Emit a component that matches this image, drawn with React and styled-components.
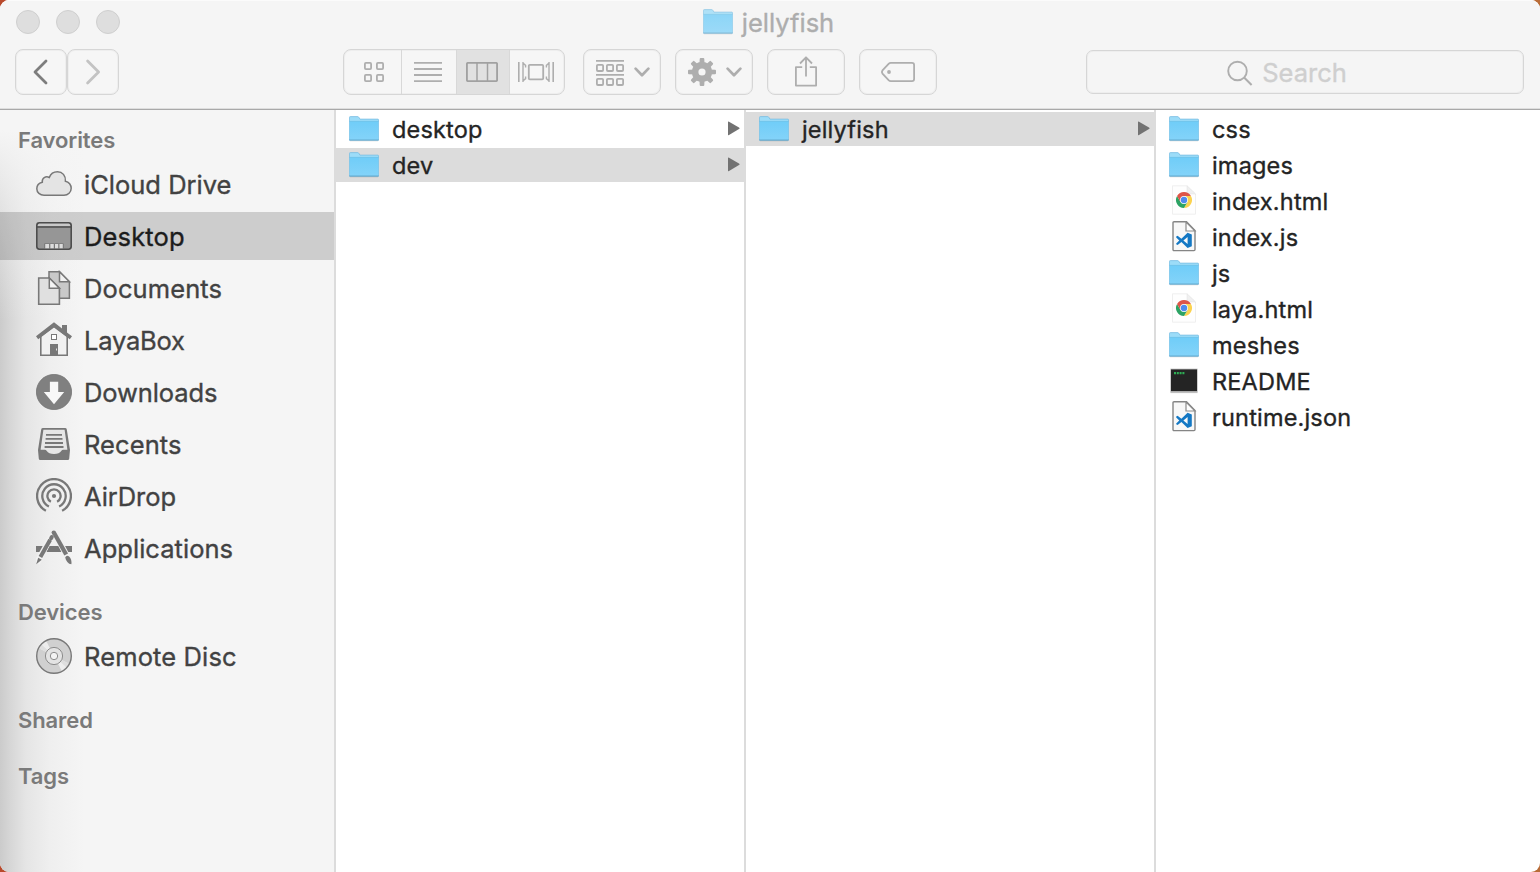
import React from 'react';
import styled, { createGlobalStyle } from 'styled-components';

const GlobalStyle = createGlobalStyle`
  * { box-sizing: border-box; }
  body {
    margin: 0;
    background: linear-gradient(to right, #b8492c, #b96c38);
    font-family: Inter, "Liberation Sans", sans-serif;
    -webkit-text-stroke: 0.35px currentColor;
  }
`;

const Window = styled.div`
  display: flex;
  flex-direction: column;
  width: 1540px;
  height: 872px;
  overflow: hidden;
  border-radius: 9px;
  background: #fff;
`;

const Header = styled.header`
  height: 110px;
  flex: none;
  background: #f5f5f5;
  border-bottom: 1px solid #a9a9a9;
  box-shadow: inset 0 1px #fbfbfb, inset 0 -1px #dedede;
`;

const TitleBar = styled.div`
  display: grid;
  grid-template-columns: 1fr auto 1fr;
  align-items: center;
  height: 44px;
  padding: 0 19px 0 16px;
`;

const Lights = styled.div`
  display: flex;
  gap: 16px;
`;

const Light = styled.span`
  width: 24px;
  height: 24px;
  border-radius: 50%;
  background: #dedede;
  border: 1px solid #cfcfcf;
`;

const Title = styled.div`
  display: flex;
  align-items: center;
  gap: 9px;
  color: #adadad;
  font-size: 25.5px;
  line-height: 32px;

  svg { opacity: 0.78; }
`;

const TitleText = styled.span`
  padding-top: 2px;
`;

const Toolbar = styled.div`
  display: flex;
  align-items: center;
  height: 46px;
  margin-top: 5px;
  padding: 0 16px 0 15px;
`;

const Button = styled.button`
  display: flex;
  align-items: center;
  justify-content: center;
  gap: ${(p) => p.$gap || 0}px;
  width: ${(p) => p.$width || 78}px;
  height: 46px;
  padding: ${(p) => p.$pad || '0'};
  border: 1px solid #d6d6d6;
  border-radius: 8px;
  background: #f6f6f6;
  box-shadow: inset 0 0 0 1px #eeeeee;
`;

const NavGroup = styled.div`
  display: flex;
  margin-right: 224px;
`;

const Segments = styled.div`
  display: flex;
  width: 222px;
  height: 46px;
  margin-right: 18px;
  overflow: hidden;
  border: 1px solid #d6d6d6;
  border-radius: 8px;
  background: #f6f6f6;
  box-shadow: inset 0 0 0 1px #eeeeee;
`;

const Segment = styled.button`
  display: flex;
  align-items: center;
  justify-content: center;
  width: ${(p) => p.$width}px;
  padding: ${(p) => p.$pad || '0'};
  border: 0;
  border-right: ${(p) => (p.$last ? '0' : '1px solid #d8d8d8')};
  background: ${(p) => (p.$active ? '#e1e1e1' : 'transparent')};
`;

const Actions = styled.div`
  display: flex;
  gap: 14px;
  margin-right: 149px;
`;

const SearchField = styled.div`
  display: flex;
  flex: 1;
  align-items: center;
  justify-content: center;
  gap: 9px;
  height: 44px;
  padding-right: 50px;
  padding-left: 14px;
  border: 1px solid #d6d6d6;
  border-radius: 7px;
  box-shadow: inset 0 0 0 1px #eeeeee;
  color: #cfcfcf;
  font-size: 25.5px;
  line-height: 30px;
`;

const SearchText = styled.span`
  padding-top: 2px;
`;

const Body = styled.div`
  display: flex;
  flex: 1;
  min-height: 0;
`;

const Sidebar = styled.nav`
  width: 336px;
  flex: none;
  padding-top: 10px;
  border-right: 2px solid #dcdcdc;
  background:
    linear-gradient(to bottom, #f5f5f5 20px, rgba(245, 245, 245, 0.6) 90px, rgba(245, 245, 245, 0) 210px),
    linear-gradient(to right, #cbcbcb 0, #d6d6d6 10px, #e5e5e5 26px, #efefef 50px, #f5f5f5 84px);
`;

const Group = styled.section`
  margin-bottom: ${(p) => p.$after}px;
`;

const GroupTitle = styled.h2`
  height: 40px;
  margin: 0;
  padding-left: 18px;
  color: #7a7a7a;
  font-size: 22px;
  font-weight: 600;
  letter-spacing: -0.1px;
  line-height: 40px;
  -webkit-text-stroke: 0;
`;

const Places = styled.div`
  display: grid;
  gap: 4px;
`;

const Place = styled.div`
  display: flex;
  align-items: center;
  gap: 12px;
  height: 48px;
  padding-left: 36px;
  background: ${(p) => (p.$active ? 'rgba(0, 0, 0, 0.16)' : 'transparent')};
  color: ${(p) => (p.$active ? '#1c1c1c' : '#424242')};
  font-size: 25.5px;
  letter-spacing: ${(p) => p.$tracking}px;
  white-space: nowrap;
`;

const Column = styled.div`
  width: ${(p) => (p.$last ? 'auto' : '410px')};
  flex: ${(p) => (p.$last ? '1' : 'none')};
  display: flex;
  flex-direction: column;
  gap: 2px;
  padding-top: 2px;
  border-right: ${(p) => (p.$last ? '0' : '2px solid #dcdcdc')};
`;

const FileRow = styled.div`
  display: flex;
  align-items: center;
  gap: 13px;
  height: 34px;
  padding: 0 4px 0 13px;
  background: ${(p) => (p.$active ? '#dcdcdc' : 'transparent')};
  color: #242424;
  font-size: 23.5px;
  letter-spacing: 0.18px;
  line-height: 32px;
`;

const FileName = styled.span`
  flex: 1;
  padding-top: 2px;
`;

const INK = '#aeaeae';
const SIDE = '#787878';

const Folder = () => (
  <svg width="30" height="26" viewBox="0 0 30 26">
    <defs>
      <linearGradient id="folderFace" x1="0" y1="0" x2="0" y2="1">
        <stop offset="0" stopColor="#70cdf8" />
        <stop offset="1" stopColor="#83d3f9" />
      </linearGradient>
    </defs>
    <path d="M.4 24V1.5Q.4.6 1.4.6H8.6Q9.4.6 10 1.5L10.9 3.1H28.6Q29.6 3.1 29.6 4V24Z" fill="#9cdcf8" stroke="#71b9df" strokeWidth=".7" />
    <path d="M.7 5.6H29.3V23.6H.7Z" fill="url(#folderFace)" />
    <path d="M.5 5.4H29.5" stroke="#63bce8" strokeWidth=".7" />
    <path d="M.3 24.1H29.7" stroke="#529fc8" strokeWidth=".9" />
    <path d="M1 25.1H29" stroke="#000" strokeOpacity=".1" strokeWidth=".7" />
  </svg>
);

const ChromeDoc = () => (
  <svg width="30" height="32" viewBox="0 0 30 32">
    <path d="M3.5.8H18L26.5 9V29.2H3.5Z" fill="#fefefe" stroke="#ebebeb" strokeWidth=".8" />
    <path d="M18 .8V9H26.5Z" fill="#f0f0f0" stroke="#e2e2e2" strokeWidth=".5" />
    <path d="M15 11H21.93A8 8 0 0 1 15 23L18.5 17Z" fill="#fbd24f" />
    <path d="M18.5 17L11.5 17L8.07 11A8 8 0 0 0 15 23Z" fill="#2ca364" />
    <path d="M15 11H21.93A8 8 0 0 0 8.07 11L11.5 17Z" fill="#de5548" />
    <circle cx="15" cy="15" r="3.9" fill="#fff" />
    <circle cx="15" cy="15" r="3.2" fill="#4f8bee" />
  </svg>
);

const CodeDoc = () => (
  <svg width="30" height="32" viewBox="0 0 30 32">
    <path d="M5 .7H17.5L26 9.5V28.5Q26 29.6 25 29.6H5Q4 29.6 4 28.5V1.7Q4 .7 5 .7Z" fill="#f8f8f8" stroke="#858585" strokeWidth="1.4" />
    <path d="M17 1V10H26Z" fill="#fff" stroke="#8b8b8b" strokeWidth="1.2" />
    <path fillRule="evenodd" d="M18.6 11.8L22.8 13.6V25.2L18.6 27L12.4 21.1L8.6 24.1L7.2 23.3V22.4L10.3 19.4L7.2 16.4V15.5L8.6 14.7L12.4 17.7ZM18.6 15.9L14.4 19.4L18.6 22.9Z" fill="#1478c4" />
  </svg>
);

const ExecFile = () => (
  <svg width="30" height="32" viewBox="0 0 30 32">
    <rect x="1" y="3.4" width="28" height="24.2" rx="1" fill="#cfcfcf" />
    <rect x="2" y="4.4" width="26" height="21.8" fill="#242424" />
    <path d="M5 8.2H16" stroke="#2fae55" strokeWidth="2.2" strokeDasharray="2 .8" />
    <path d="M1.5 27.6H28.5" stroke="#b0b0b0" strokeWidth=".8" />
  </svg>
);

const Disclosure = () => (
  <svg width="12" height="16" viewBox="0 0 12 16">
    <path d="M0 .8Q0 .2 1 .7L11 6.5Q12.2 7.3 11 8.1L1 14Q0 14.5 0 13.8Z" fill="#727272" />
  </svg>
);

const SideSvg = ({ children }) => (
  <svg width="36" height="36" viewBox="0 0 36 36" fill="none">{children}</svg>
);

const CloudIcon = () => (
  <SideSvg>
    <path d="M8 29.2C4 29.2.8 26.4.8 22.7C.8 19.4 3 16.9 6.3 16.2C5.8 12.2 9.6 9.7 13.3 11.5C14.6 7.8 18 5.7 21.5 5.7C26.4 5.7 29.9 9.7 29.4 15.2C33 15.7 35.2 19 35.2 22.2C35.2 26.2 32 29.2 28 29.2Z" fill="#e4e4e4" stroke={SIDE} strokeWidth="1.5" />
  </SideSvg>
);

const DesktopIcon = () => (
  <SideSvg>
    <rect x=".8" y="4.8" width="34.4" height="26.4" rx="2.6" fill="#969696" stroke="#4d4d4d" strokeWidth="1.6" />
    <path d="M1.8 7.4Q1.8 5.8 3.4 5.8H32.6Q34.2 5.8 34.2 7.4V8H1.8Z" fill="#c9c9c9" />
    <path d="M1 8.9H35" stroke="#4d4d4d" strokeWidth="1.5" />
    <path d="M8.4 25.4H27.6V30.3H8.4Z" fill="#6c6c6c" />
    <path d="M9.2 26H13.2V30.3H9.2ZM14.3 26H17.8V30.3H14.3ZM18.9 26H22.3V30.3H18.9ZM23.4 26H26.8V30.3H23.4Z" fill="#dcdcdc" />
  </SideSvg>
);

const DocumentsIcon = () => (
  <SideSvg>
    <path d="M13 1.7H23.5L33.4 11.8V28.2H13Z" fill="#c9c9c9" stroke={SIDE} strokeWidth="1.5" />
    <path d="M23.5 1.7V11.8H33.4Z" fill="#f2f2f2" stroke={SIDE} strokeWidth="1.5" />
    <path d="M2.7 8H13.3L23.4 18.2V34.2H2.7Z" fill="#e0e0e0" stroke={SIDE} strokeWidth="1.6" />
    <path d="M13.3 8V18.2H23.4Z" fill="#f4f4f4" stroke={SIDE} strokeWidth="1.5" />
  </SideSvg>
);

const HomeIcon = () => (
  <SideSvg>
    <path d="M4.8 14L18 4L31.2 14V33.3H4.8Z" fill="#f1f1f1" stroke={SIDE} strokeWidth="1.6" />
    <path d="M0 14.3L18 .3L26 6.6V3H31V10.4L36 14.3L33.8 17.2L18 5.6L2.2 17.2Z" fill={SIDE} />
    <rect x="15.5" y="12.5" width="5" height="5" fill="#fff" stroke={SIDE} />
    <path d="M14 22H22V33.5H14Z" fill={SIDE} />
    <path d="M20 26.5H20.9V28.5H20Z" fill="#eee" />
  </SideSvg>
);

const DownloadsIcon = () => (
  <SideSvg>
    <circle cx="18" cy="18" r="17.6" fill="#808080" stroke="#747474" strokeWidth=".8" />
    <path d="M13.9 7.8H22.2V18H28.2L18 30.2L7.8 18H13.9Z" fill="#f8f8f8" />
  </SideSvg>
);

const RecentsIcon = () => (
  <SideSvg>
    <path d="M7 2H29Q30.6 2 30.8 3.4L34 24L33.2 32.8Q33 34 31.8 34H4.2Q3 34 2.8 32.8L2 24L5.2 3.4Q5.4 2 7 2Z" fill={SIDE} />
    <path d="M7.4 3.8H28.6L31.4 23.8H27.2Q26 23.8 25.2 25Q23.4 28 18 28Q12.6 28 10.8 25Q10 23.8 8.8 23.8H4.6Z" fill="#e6e6e6" />
    <path d="M10 8.8H26M9.6 12.9H26.5M9 17H27M8.6 21H27.5" stroke={SIDE} strokeWidth="1.8" />
  </SideSvg>
);

const AirDropIcon = () => (
  <SideSvg>
    <circle cx="18" cy="18" r="2.1" fill={SIDE} />
    <path d="M9.9 32.8A16.9 16.9 0 1 1 26.1 32.8M12.9 28.5A11.7 11.7 0 1 1 23.1 28.5M14.9 23.8A6.6 6.6 0 1 1 21.1 23.8" stroke={SIDE} strokeWidth="2.3" />
  </SideSvg>
);

const ApplicationsIcon = () => (
  <SideSvg>
    <path d="M0 16H36V22H0Z" fill={SIDE} />
    <path d="M15.5 6.5L1 33M18 2L35 34" stroke="#f1f1f1" strokeWidth="6.4" />
    <path d="M13.8 16H22.2L25.3 22H10.7Z" fill={SIDE} />
    <path d="M14.2 9.8L4.4 27" stroke={SIDE} strokeWidth="4" />
    <path d="M15.8 7L15.1 8.2" stroke={SIDE} strokeWidth="4" strokeLinecap="round" />
    <path d="M2.2 27.8L5.8 29.8L.2 34.2Z" fill={SIDE} />
    <path d="M18 2.8L30.2 24.5" stroke={SIDE} strokeWidth="4.2" />
    <circle cx="17.8" cy="2.6" r="2.2" fill={SIDE} />
    <path d="M29.2 27.4Q30.6 24.6 33.1 26.4Q36 29.4 35.4 34.3Q30.6 33.4 29.2 27.4Z" fill={SIDE} />
  </SideSvg>
);

const DiscIcon = () => (
  <SideSvg>
    <circle cx="18" cy="18" r="17.3" fill="#d0d0d0" />
    <path d="M18 18L2.5 10A17.3 17.3 0 0 1 10 2.5ZM18 18L33.5 26A17.3 17.3 0 0 1 26 33.5Z" fill="#ededed" />
    <path d="M18 18L2.5 10L5 6ZM18 18L33.5 26L31 30Z" fill="#dedede" />
    <circle cx="18" cy="18" r="17.3" stroke={SIDE} strokeWidth="1.4" />
    <circle cx="18" cy="18" r="8.6" fill="#e3e3e3" stroke="#8c8c8c" strokeWidth="1" />
    <circle cx="18" cy="18" r="3.7" fill="#f3f3f3" stroke="#8c8c8c" strokeWidth="1" />
  </SideSvg>
);

const Arrow = ({ flip, color }) => (
  <svg width="16" height="26" viewBox="0 0 16 26" fill="none">
    <path d={flip ? 'M2.6 2L13.6 13L2.6 24' : 'M13 2L2 13L13 24'} stroke={color} strokeWidth="2.8" strokeLinecap="round" strokeLinejoin="round" />
  </svg>
);

const Chevron = () => (
  <svg width="16" height="10" viewBox="0 0 16 10" fill="none">
    <path d="M1.6 1.6L8 8.2L14.4 1.6" stroke={INK} strokeWidth="2.7" strokeLinecap="round" strokeLinejoin="round" />
  </svg>
);

const GridIcon = () => (
  <svg width="20" height="20" viewBox="0 0 20 20" fill="none" stroke={INK} strokeWidth="1.8">
    {[0, 12].map((y) => [0, 12].map((x) => <rect key={`${x}-${y}`} x={x + 0.9} y={y + 0.9} width="6.2" height="6.2" rx="1" />))}
  </svg>
);

const ListIcon = () => (
  <svg width="28" height="20" viewBox="0 0 28 20" stroke={INK} strokeWidth="1.8">
    <path d="M0 .9H28M0 7H28M0 13H28M0 19.1H28" />
  </svg>
);

const ColumnsIcon = () => (
  <svg width="32" height="20" viewBox="0 0 32 20" fill="none" stroke="#a1a1a1" strokeWidth="1.9">
    <rect x=".9" y=".9" width="30.2" height="18.2" rx="1.2" />
    <path d="M11 1V19M21.5 1V19" strokeWidth="1.5" />
  </svg>
);

const FlowIcon = () => (
  <svg width="36" height="20" viewBox="0 0 36 20" fill="none" stroke={INK} strokeWidth="1.6">
    <path d="M.8 0V20M35.2 0V20" />
    <path d="M5 0V20M31 0V20M5.5 1.5L7.6 3.4V5.6M5.5 18.5L7.6 16.6V14.4M30.5 1.5L28.4 3.4V5.6M30.5 18.5L28.4 16.6V14.4" strokeWidth="1.4" />
    <rect x="10.8" y="2.9" width="14.4" height="14.4" rx="1" strokeWidth="1.8" />
  </svg>
);

const ArrangeIcon = () => (
  <svg width="28" height="28" viewBox="0 0 28 28" fill="none" stroke={INK} strokeWidth="1.8">
    <path d="M0 2.9H28M0 16.9H28" />
    {[6.8, 20.8].map((y) => [0.9, 10.9, 20.9].map((x) => <rect key={`${x}-${y}`} x={x} y={y} width="6.2" height="6.2" rx="1" />))}
  </svg>
);

const GearIcon = () => (
  <svg width="28" height="28" viewBox="0 0 28 28" fill="none">
    {[0, 45, 90, 135].map((a) => (
      <path key={a} d="M11.7 1Q11.7 0 12.7 0H15.3Q16.3 0 16.3 1L16.6 7H11.4ZM11.7 27Q11.7 28 12.7 28H15.3Q16.3 28 16.3 27L16.6 21H11.4Z" fill={INK} transform={`rotate(${a} 14 14)`} />
    ))}
    <circle cx="14" cy="14" r="6.9" stroke={INK} strokeWidth="6.6" />
  </svg>
);

const ShareIcon = () => (
  <svg width="22" height="32" viewBox="0 0 22 32" fill="none" stroke={INK} strokeWidth="1.8" strokeLinejoin="round">
    <path d="M7.2 11.2H.9V29.6H21.1V11.2H14.8M11 20.4V1.4M5 7.5L11 1.3L17 7.5" />
  </svg>
);

const TagIcon = () => (
  <svg width="34" height="20" viewBox="0 0 34 20" fill="none">
    <path d="M9.8.9H31Q33.1.9 33.1 3V17Q33.1 19.1 31 19.1H9.8Q8.6 19.1 7.6 18.1L1.5 11.6Q.4 10 1.5 8.4L7.6 1.9Q8.6.9 9.8.9Z" stroke={INK} strokeWidth="1.8" />
    <circle cx="8" cy="10" r="1.9" fill={INK} />
  </svg>
);

const SearchIcon = () => (
  <svg width="26" height="28" viewBox="0 0 26 28" fill="none" stroke={INK} strokeWidth="1.9">
    <circle cx="10.5" cy="13" r="9.3" />
    <path d="M17.1 19.6L24.6 27" strokeWidth="2.1" />
  </svg>
);

const places = [
  ['iCloud Drive', CloudIcon, 0],
  ['Desktop', DesktopIcon, 0.15],
  ['Documents', DocumentsIcon, 0.1],
  ['LayaBox', HomeIcon, -0.22],
  ['Downloads', DownloadsIcon, -0.1],
  ['Recents', RecentsIcon, 0.08],
  ['AirDrop', AirDropIcon, -0.05],
  ['Applications', ApplicationsIcon, 0.04],
];

const groups = [
  { title: 'Favorites', after: 20, items: places },
  { title: 'Devices', after: 20, items: [['Remote Disc', DiscIcon, 0.13]] },
  { title: 'Shared', after: 16, items: [] },
  { title: 'Tags', after: 0, items: [] },
];

const columns = [
  [['desktop', Folder], ['dev', Folder]],
  [['jellyfish', Folder]],
  [
    ['css', Folder],
    ['images', Folder],
    ['index.html', ChromeDoc],
    ['index.js', CodeDoc],
    ['js', Folder],
    ['laya.html', ChromeDoc],
    ['meshes', Folder],
    ['README', ExecFile],
    ['runtime.json', CodeDoc],
  ],
];

const openRows = ['dev', 'jellyfish'];

export default function App() {
  return (
    <>
      <GlobalStyle />
      <Window>
        <Header>
          <TitleBar>
            <Lights><Light /><Light /><Light /></Lights>
            <Title><Folder /><TitleText>jellyfish</TitleText></Title>
          </TitleBar>
          <Toolbar>
            <NavGroup>
              <Button $width={52} aria-label="Back"><Arrow color="#7d7d7d" /></Button>
              <Button $width={52} aria-label="Forward"><Arrow flip color="#c3c3c3" /></Button>
            </NavGroup>
            <Segments>
              <Segment $width={58} $pad="0 0 0 3px"><GridIcon /></Segment>
              <Segment $width={55} $pad="0 2px 0 0"><ListIcon /></Segment>
              <Segment $width={53} $pad="0 2px 0 0" $active><ColumnsIcon /></Segment>
              <Segment $width={54} $pad="0 2px 0 0" $last><FlowIcon /></Segment>
            </Segments>
            <Actions>
              <Button $gap={10} $pad="0 0 0 2px"><ArrangeIcon /><Chevron /></Button>
              <Button $gap={10} $pad="0 0 0 2px"><GearIcon /><Chevron /></Button>
              <Button><ShareIcon /></Button>
              <Button><TagIcon /></Button>
            </Actions>
            <SearchField><SearchIcon /><SearchText>Search</SearchText></SearchField>
          </Toolbar>
        </Header>
        <Body>
          <Sidebar>
            {groups.map(({ title, after, items }) => (
              <Group key={title} $after={after}>
                <GroupTitle>{title}</GroupTitle>
                <Places>
                  {items.map(([name, Icon, tracking]) => (
                    <Place key={name} $active={name === 'Desktop'} $tracking={tracking}>
                      <Icon />{name}
                    </Place>
                  ))}
                </Places>
              </Group>
            ))}
          </Sidebar>
          {columns.map((files, i) => {
            const last = i === columns.length - 1;
            return (
              <Column key={i} $last={last}>
                {files.map(([name, Icon]) => (
                  <FileRow key={name} $active={openRows.includes(name)}>
                    <Icon />
                    <FileName>{name}</FileName>
                    {!last && <Disclosure />}
                  </FileRow>
                ))}
              </Column>
            );
          })}
        </Body>
      </Window>
    </>
  );
}
